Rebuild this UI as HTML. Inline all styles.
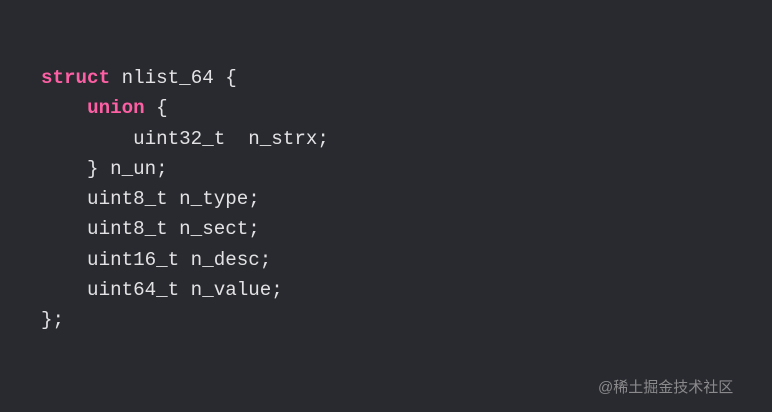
<!DOCTYPE html>
<html><head><meta charset="utf-8"><style>
html,body{margin:0;padding:0;}
body{width:772px;height:412px;background:#292a2f;position:relative;overflow:hidden;}
pre{position:absolute;left:41px;top:63px;margin:0;font-family:"Liberation Mono",monospace;font-size:19.2px;line-height:30.3px;color:#e2e2e4;}
.k{color:#fc5fa3;font-weight:bold;}
.w{position:absolute;left:598px;top:376px;font-family:"Liberation Sans","Noto Sans CJK SC",sans-serif;font-size:15px;color:#8a8a8c;}
</style></head><body>
<pre><span class="k">struct</span> nlist_64 {
    <span class="k">union</span> {
        uint32_t  n_strx;
    } n_un;
    uint8_t n_type;
    uint8_t n_sect;
    uint16_t n_desc;
    uint64_t n_value;
};</pre>
<div class="w">@稀土掘金技术社区</div>
</body></html>
